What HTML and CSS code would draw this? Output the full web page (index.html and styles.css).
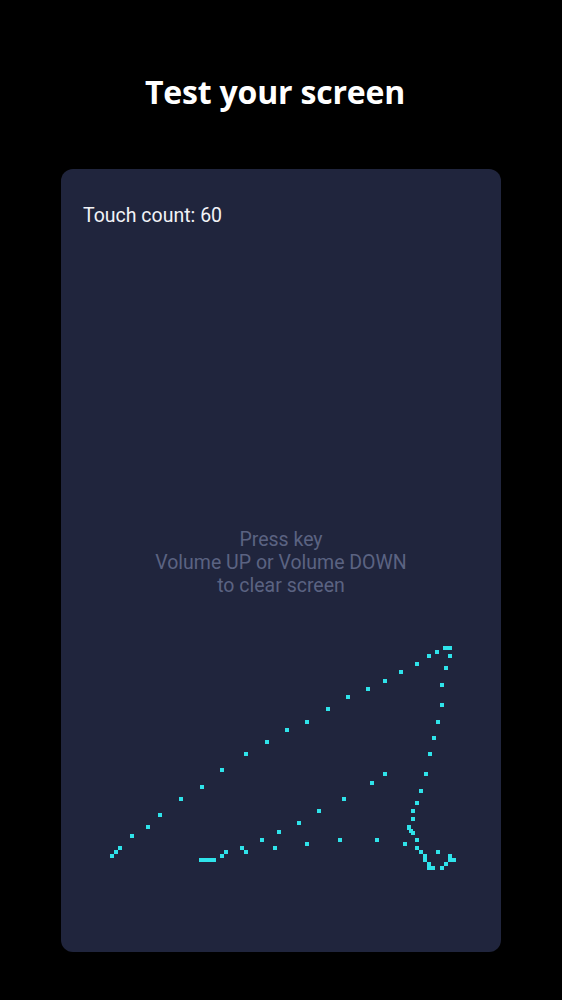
FILE: index.html
```html
<!DOCTYPE html>
<html>
<head>
<meta charset="utf-8">
<link rel="stylesheet" href="styles.css">
</head>
<body>
<main class="screen">
  <h1 class="title">Test your screen</h1>
  <section class="card">
    <div class="count">Touch count: 60</div>
    <div class="hint">Press key<br>Volume UP or Volume DOWN<br>to clear screen</div>
    <svg class="trace" viewBox="61 169 440 783" width="440" height="783" aria-hidden="true">
      <g fill="#2fe3ea">
        <rect x="110" y="854" width="4" height="4"/>
        <rect x="114" y="850" width="4" height="4"/>
        <rect x="118" y="846" width="4" height="4"/>
        <rect x="130" y="834" width="4" height="4"/>
        <rect x="146" y="825" width="4" height="4"/>
        <rect x="158" y="813" width="4" height="4"/>
        <rect x="179" y="797" width="4" height="4"/>
        <rect x="200" y="785" width="4" height="4"/>
        <rect x="220" y="768" width="4" height="4"/>
        <rect x="244" y="752" width="4" height="4"/>
        <rect x="265" y="740" width="4" height="4"/>
        <rect x="285" y="728" width="4" height="4"/>
        <rect x="305" y="720" width="4" height="4"/>
        <rect x="326" y="707" width="4" height="4"/>
        <rect x="346" y="695" width="4" height="4"/>
        <rect x="366" y="687" width="4" height="4"/>
        <rect x="383" y="679" width="4" height="4"/>
        <rect x="399" y="670" width="4" height="4"/>
        <rect x="415" y="662" width="4" height="4"/>
        <rect x="427" y="654" width="4" height="4"/>
        <rect x="435" y="650" width="4" height="4"/>
        <rect x="443" y="646" width="9" height="4"/>
        <rect x="448" y="654" width="4" height="4"/>
        <rect x="444" y="666" width="4" height="4"/>
        <rect x="440" y="683" width="4" height="4"/>
        <rect x="440" y="703" width="4" height="4"/>
        <rect x="436" y="720" width="4" height="4"/>
        <rect x="432" y="736" width="4" height="4"/>
        <rect x="428" y="752" width="4" height="4"/>
        <rect x="424" y="772" width="4" height="4"/>
        <rect x="419" y="789" width="4" height="4"/>
        <rect x="415" y="801" width="4" height="4"/>
        <rect x="411" y="809" width="4" height="4"/>
        <rect x="411" y="817" width="4" height="4"/>
        <rect x="407" y="825" width="4" height="5"/>
        <rect x="409" y="829" width="4" height="4"/>
        <rect x="411" y="831" width="4" height="4"/>
        <rect x="415" y="838" width="4" height="4"/>
        <rect x="403" y="842" width="4" height="4"/>
        <rect x="415" y="846" width="4" height="4"/>
        <rect x="419" y="850" width="4" height="4"/>
        <rect x="423" y="854" width="4" height="8"/>
        <rect x="427" y="862" width="4" height="8"/>
        <rect x="431" y="866" width="4" height="4"/>
        <rect x="436" y="850" width="4" height="4"/>
        <rect x="440" y="866" width="4" height="4"/>
        <rect x="444" y="862" width="4" height="4"/>
        <rect x="448" y="854" width="4" height="8"/>
        <rect x="452" y="858" width="4" height="4"/>
        <rect x="383" y="772" width="4" height="4"/>
        <rect x="370" y="781" width="4" height="4"/>
        <rect x="342" y="797" width="4" height="4"/>
        <rect x="317" y="809" width="4" height="4"/>
        <rect x="297" y="821" width="4" height="4"/>
        <rect x="277" y="830" width="4" height="4"/>
        <rect x="260" y="838" width="4" height="4"/>
        <rect x="273" y="846" width="4" height="4"/>
        <rect x="240" y="846" width="4" height="4"/>
        <rect x="244" y="850" width="4" height="4"/>
        <rect x="224" y="850" width="4" height="4"/>
        <rect x="220" y="854" width="4" height="4"/>
        <rect x="199" y="858" width="17" height="4"/>
        <rect x="305" y="842" width="4" height="4"/>
        <rect x="338" y="838" width="4" height="4"/>
        <rect x="375" y="838" width="4" height="4"/>
      </g>
    </svg>
  </section>
</main>
</body>
</html>
```
FILE: styles.css
```css
html, body {
  margin: 0;
  padding: 0;
  background: #000;
}
.screen {
  width: 562px;
  height: 1000px;
  display: flex;
  flex-direction: column;
  align-items: center;
  background: #000;
}
.title {
  margin: 70px 0 0;
  padding-right: 12px;
  font-family: "Open Sans", "Noto Sans", sans-serif;
  font-weight: 700;
  font-size: 32px;
  line-height: 44px;
  color: #fff;
  letter-spacing: -0.2px;
}
.card {
  position: relative;
  margin-top: 55px;
  width: 440px;
  height: 783px;
  border-radius: 12px;
  background: #20253d;
  display: grid;
  grid-template: 1fr / 1fr;
  overflow: hidden;
}
.count {
  grid-area: 1 / 1;
  align-self: start;
  margin: 35px 0 0 22px;
  font-family: Roboto, "Liberation Sans", sans-serif;
  font-size: 19.5px;
  line-height: 24px;
  color: #f2f3f7;
}
.hint {
  grid-area: 1 / 1;
  align-self: center;
  padding-top: 4px;
  text-align: center;
  font-family: Roboto, "Liberation Sans", sans-serif;
  font-size: 19.5px;
  line-height: 23px;
  color: #5b6382;
}
.trace {
  position: absolute;
  left: 0;
  top: 0;
  display: block;
}
```
